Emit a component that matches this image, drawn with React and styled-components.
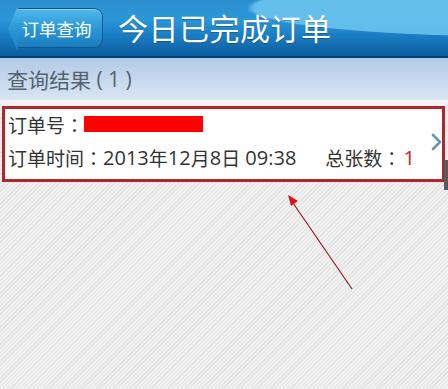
import React from "react";
import styled, { createGlobalStyle } from "styled-components";

const Global = createGlobalStyle`
  html, body { margin: 0; padding: 0; }
  body {
    width: 448px; height: 389px; overflow: hidden;
    font-family: "Noto Sans CJK SC", "Noto Sans", sans-serif;
  }
`;

const Screen = styled.div`
  position: relative;
  width: 448px;
  height: 389px;
  display: flex;
  flex-direction: column;
  background-color: #ececec;
  background-image: repeating-linear-gradient(135deg, #e3e3e3 0px, #e3e3e3 1px, #f0f0f0 1px, #f0f0f0 3px);
`;

const Header = styled.header`
  height: 56px;
  flex: none;
  display: flex;
  align-items: center;
  gap: 15px;
  padding: 0 0 0 8px;
  border-bottom: 2px solid #07406f;
  background-image:
    radial-gradient(ellipse 380px 40px at 520px 8px, rgba(120, 205, 245, 0.75) 0%, rgba(120, 205, 245, 0.75) 70%, rgba(120, 205, 245, 0) 72%),
    linear-gradient(to bottom, #2d8fd0 0%, #2a97d9 35%, #1a7cc2 65%, #0c5c9e 100%);
`;

const BackButton = styled.div`
  position: relative;
  height: 40px;
  width: 86px;
  margin-left: 9px;
  padding-right: 6px;
  box-sizing: border-box;
  display: flex;
  align-items: center;
  justify-content: center;
  color: #fff;
  font-size: 17.5px;
  border-radius: 0 9px 9px 0;
  border: 1px solid #0c5791;
  border-left: none;
  background: linear-gradient(to bottom, #4fb8ec 0%, #2c98d8 50%, #1b7dc0 100%);
  box-shadow: inset 0 1px 0 rgba(255,255,255,0.35);
  &::before {
    content: "";
    position: absolute;
    left: -9px;
    top: -1px;
    width: 10px;
    height: 42px;
    background: linear-gradient(to bottom, #4fb8ec 0%, #2c98d8 50%, #1b7dc0 100%);
    clip-path: polygon(100% 0, 90% 0, 0 50%, 90% 100%, 100% 100%, 100% 0);
  }
`;

const Title = styled.h1`
  margin: 0 0 2px 0;
  font-size: 30px;
  font-weight: 400;
  color: #ffffff;
  letter-spacing: 0.5px;
  text-shadow: 0 1px 1px rgba(0,0,0,0.25);
`;

const SubHeader = styled.div`
  height: 42px;
  flex: none;
  display: flex;
  align-items: center;
  padding-left: 7px;
  font-size: 21px;
  color: #55636f;
  white-space: pre;
  background: linear-gradient(to bottom, #b3c9e5 0%, #c6d7ed 50%, #d8e5f4 100%);
  border-bottom: 6px solid #f4f4f4;
`;

const Punct = styled.span`
  font-family: "Noto Sans CJK TC", "Noto Sans CJK SC", sans-serif;
`;

const Num = styled.span`
  font-family: "Open Sans", "Noto Sans CJK SC", sans-serif;
  font-size: ${(p) => p.$size || 20}px;
`;

const Card = styled.div`
  margin: 0 3px 0 2px;
  height: 70px;
  border: 3px solid #b1262c;
  background: #ffffff;
  display: flex;
  align-items: flex-start;
`;

const CardBody = styled.div`
  flex: 1;
  display: flex;
  flex-direction: column;
  gap: 7px;
  padding-left: 3px;
  padding-top: 2px;
`;

const Row = styled.div`
  display: flex;
  align-items: center;
  height: 26px;
  font-size: 19px;
  color: #333;
  white-space: pre;
`;

const Redacted = styled.span`
  display: inline-block;
  width: 119px;
  height: 16px;
  background: #ff0000;
`;

const Spacer = styled.span`
  width: ${(p) => p.$w}px;
  display: inline-block;
`;

const Count = styled(Num)`
  color: #c8242b;
  margin-left: 2px;
`;

const Chevron = styled.svg`
  align-self: center;
  width: 12px;
  height: 18px;
  margin-right: -1px;
  margin-top: -4px;
  flex: none;
`;

const ScrollNub = styled.div`
  position: absolute;
  right: 0;
  top: 160px;
  width: 4px;
  height: 30px;
  background: #5a5a5a;
`;

const Annotation = styled.svg`
  position: absolute;
  left: 0;
  top: 0;
  width: 448px;
  height: 389px;
  pointer-events: none;
`;

export default function App() {
  return (
    <>
      <Global />
      <Screen>
        <Header>
          <BackButton>订单查询</BackButton>
          <Title>今日已完成订单</Title>
        </Header>
        <SubHeader>
          查询结果<Num $size={21}> ( 1 )</Num>
        </SubHeader>
        <Card>
          <CardBody>
            <Row>
              订单号<Punct>：</Punct>
              <Redacted />
            </Row>
            <Row>
              订单时间<Punct>：</Punct>
              <Num>2013</Num>年<Num>12</Num>月<Num>8</Num>日<Num> 09:38</Num>
              <Spacer $w={29} />
              总张数<Punct>：</Punct>
              <Count>1</Count>
            </Row>
          </CardBody>
          <Chevron viewBox="0 0 12 18">
            <path d="M2 2 L9 9 L2 16" fill="none" stroke="#6a96b0" strokeWidth="2.6" strokeLinecap="round" strokeLinejoin="round" />
          </Chevron>
        </Card>
        <ScrollNub />
        <Annotation viewBox="0 0 448 389">
          <line x1="352" y1="289" x2="293" y2="203" stroke="#8a1f24" strokeWidth="1.2" />
          <polygon points="288,195 298,201 291,206" fill="#d8141c" />
        </Annotation>
      </Screen>
    </>
  );
}
